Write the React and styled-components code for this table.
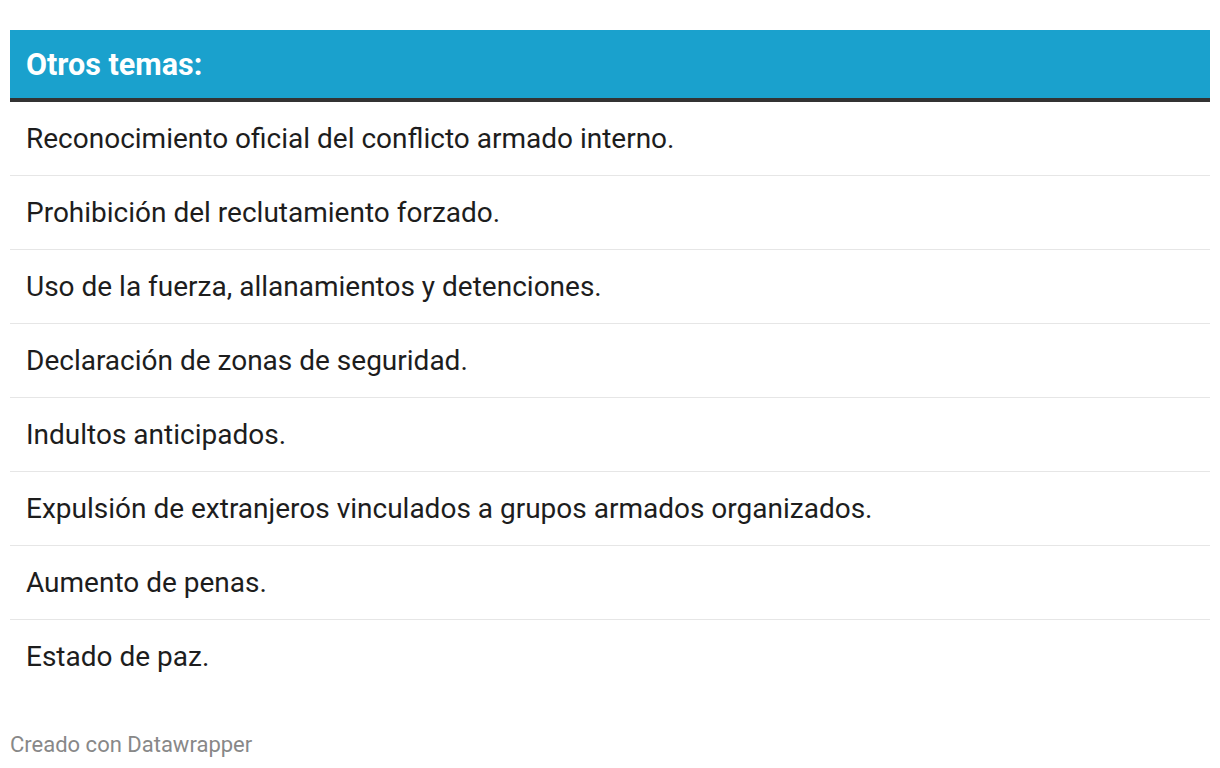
import React from 'react';
import styled, { createGlobalStyle } from 'styled-components';

const items = [
  'Reconocimiento oficial del conflicto armado interno.',
  'Prohibición del reclutamiento forzado.',
  'Uso de la fuerza, allanamientos y detenciones.',
  'Declaración de zonas de seguridad.',
  'Indultos anticipados.',
  'Expulsión de extranjeros vinculados a grupos armados organizados.',
  'Aumento de penas.',
  'Estado de paz.',
];

const App = () => (
  <>
    <GlobalStyle />
    <Page>
      <Table>
        <Header>Otros temas:</Header>
        {items.map((text, i) => (
          <Row key={text} last={i === items.length - 1}>
            {text}
          </Row>
        ))}
      </Table>
      <Footer>Creado con Datawrapper</Footer>
    </Page>
  </>
);

export default App;

const GlobalStyle = createGlobalStyle`
  body {
    margin: 0;
    background: #fff;
    font-family: Roboto, "Liberation Sans", sans-serif;
  }
`;

const Page = styled.div`
  padding: 30px 10px 0;
`;

const Table = styled.div`
  display: flex;
  flex-direction: column;
`;

const Header = styled.div`
  height: 68px;
  display: flex;
  align-items: center;
  padding: 0 16px;
  background-color: #1aa1cd;
  border-bottom: 4px solid #333333;
  color: #fff;
  font-size: 30.5px;
  font-weight: 700;
`;

const Row = styled.div`
  height: 73px;
  display: flex;
  align-items: center;
  padding: 0 16px;
  font-size: 28px;
  color: #1d1d1d;
  border-bottom: 1px solid ${(p) => (p.last ? 'transparent' : '#e6e6e6')};
`;

const Footer = styled.div`
  margin-top: 38px;
  font-size: 22px;
  color: #888;
`;
